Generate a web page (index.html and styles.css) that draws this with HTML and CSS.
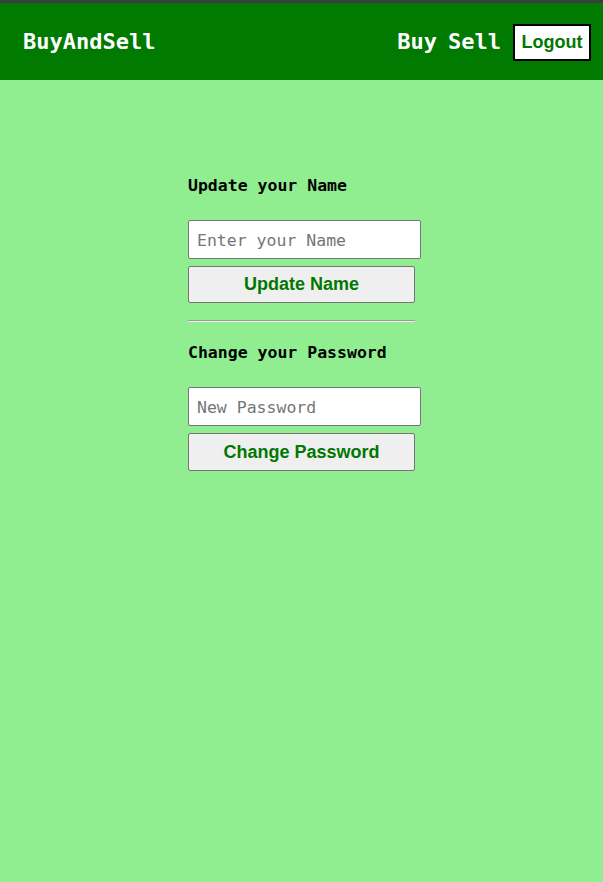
FILE: index.html
```html
<!DOCTYPE html>
<html>
<head>
<meta charset="utf-8">
<link rel="stylesheet" href="styles.css">
</head>
<body>
<div class="topbar"></div>
<header class="header">
  <div class="brand">BuyAndSell</div>
  <nav class="nav">
    <span class="nav-link">Buy</span>
    <span class="nav-link">Sell</span>
    <button class="logout">Logout</button>
  </nav>
</header>
<main class="main">
  <div class="panel">
    <h3 class="title">Update your Name</h3>
    <input class="field" type="text" placeholder="Enter your Name">
    <button class="action">Update Name</button>
    <hr class="divider">
    <h3 class="title title-2">Change your Password</h3>
    <input class="field" type="password" placeholder="New Password">
    <button class="action action-2">Change Password</button>
  </div>
</main>
</body>
</html>
```
FILE: styles.css
```css
html, body {
  margin: 0;
  padding: 0;
  background: #90ee90;
  height: 100%;
}
body {
  font-family: "DejaVu Sans Mono", monospace;
}
.topbar {
  height: 3px;
  background: #3c3c3c;
}
.header {
  height: 77px;
  background: #007a00;
  display: flex;
  align-items: center;
  justify-content: space-between;
  padding: 0 12px 0 23px;
}
.brand {
  color: #fff;
  font-weight: bold;
  font-size: 22px;
}
.nav {
  display: flex;
  align-items: center;
}
.nav-link {
  color: #fff;
  font-weight: bold;
  font-size: 22px;
  margin-right: 11px;
}
.nav-link + .nav-link {
  margin-right: 12px;
}
.logout {
  box-sizing: border-box;
  width: 78px;
  height: 37px;
  background: #fff;
  border: 2px solid #000;
  border-radius: 0;
  color: #007800;
  font-family: "Liberation Sans", Arial, sans-serif;
  font-weight: bold;
  font-size: 18px;
  padding: 0;
  margin-top: 1px;
}
.main {
  padding-top: 96px;
}
.panel {
  width: 227px;
  margin: 0 auto;
  display: flex;
  flex-direction: column;
  align-items: flex-start;
}
.title {
  margin: 0;
  font-size: 16.5px;
  line-height: 20px;
  font-weight: bold;
  color: #000;
  white-space: nowrap;
}
.field {
  box-sizing: border-box;
  width: 233px;
  height: 39px;
  margin-top: 24px;
  border: 1px solid #767676;
  border-radius: 2px;
  background: #fff;
  padding: 1px 8px 0;
  font-family: "DejaVu Sans Mono", monospace;
  font-size: 16.5px;
  color: #000;
  outline: none;
}
.field::placeholder {
  color: #757575;
}
.action {
  box-sizing: border-box;
  width: 227px;
  height: 37px;
  margin-top: 7px;
  background: #efefef;
  border: 1px solid #767676;
  border-radius: 2px;
  color: #007800;
  font-family: "Liberation Sans", Arial, sans-serif;
  font-weight: bold;
  font-size: 18px;
  padding: 0;
}
.action-2 {
  height: 38px;
}
.divider {
  box-sizing: border-box;
  width: 227px;
  height: 2px;
  margin: 17px 0 0 0;
  border: none;
  border-top: 1px solid #9a9a9a;
  border-bottom: 1px solid #eeeeee;
}
.title-2 {
  margin-top: 21px;
}
```
